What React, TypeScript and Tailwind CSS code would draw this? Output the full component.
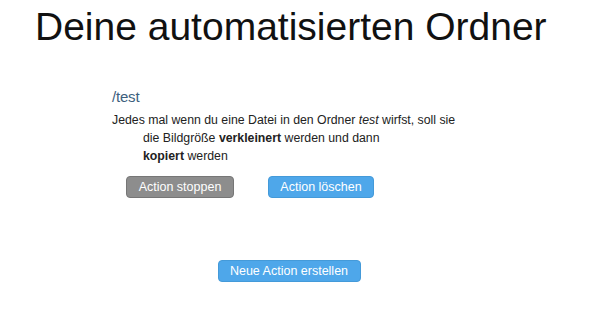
import React from 'react';

const font = { fontFamily: '"Liberation Sans", Arial, Helvetica, sans-serif' };

export default function App() {
  return (
    <div className="w-[595px] h-[312px] bg-white text-[#1a1a1a] overflow-hidden" style={font}>
      <h1 className="pl-[35px] pt-[3px] text-[39px] leading-[48px] font-normal text-[#111]">
        Deine automatisierten Ordner
      </h1>

      <div className="pl-[112px] pt-[37px]">
        <div className="text-[15px] leading-[18px] text-[#3d5f7e] tracking-[-0.2px]">/test</div>
        <div className="mt-[5px] text-[12.3px] leading-[18px] text-[#222]">
          <div>
            Jedes mal wenn du eine Datei in den Ordner <em>test</em> wirfst, soll sie
          </div>
          <div className="pl-[31px]">
            die Bildgröße <strong>verkleinert</strong> werden und dann
          </div>
          <div className="pl-[31px]">
            <strong>kopiert</strong> werden
          </div>
        </div>

        <div className="flex gap-[34px] pl-[14px] mt-[11px]">
          <button className="w-[108px] h-[22px] rounded-[4px] bg-[#8d8d8d] border border-[#767676] text-white text-[12.5px] leading-none">
            Action stoppen
          </button>
          <button className="w-[106px] h-[22px] rounded-[4px] bg-[#4ea7ea] border border-[#449ad9] text-white text-[12.5px] leading-none">
            Action löschen
          </button>
        </div>
      </div>

      <div className="flex justify-center pt-[62px] pr-[17px]">
        <button className="w-[143px] h-[22px] rounded-[4px] bg-[#4ea7ea] border border-[#449ad9] text-white text-[12.5px] leading-none">
          Neue Action erstellen
        </button>
      </div>
    </div>
  );
}
